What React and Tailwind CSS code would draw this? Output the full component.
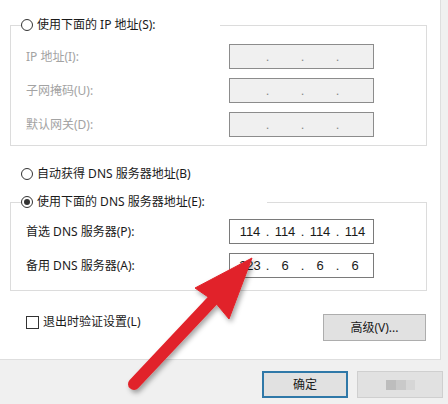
import React from 'react';

const font = { fontFamily: '"Noto Sans", "Noto Sans CJK SC", sans-serif' };

function Radio({ checked }) {
  return (
    <span className="w-[12px] h-[12px] rounded-full border border-[#333] bg-white flex items-center justify-center shrink-0">
      {checked && <span className="w-[6px] h-[6px] rounded-full bg-[#333]" />}
    </span>
  );
}

function IpBox({ parts, disabled }) {
  const seg = (v, i) => (
    <React.Fragment key={i}>
      {i > 0 && <span className={`w-[7px] text-center ${disabled ? 'text-[#8a8a8a]' : ''}`}>.</span>}
      <span className="w-[28px] text-center">{v}</span>
    </React.Fragment>
  );
  return (
    <div
      className={`h-[25px] w-[145px] border flex items-center pl-[6px] text-[13px] ${
        disabled ? 'bg-[#f0f0f0] border-[#8c8c8c]' : 'bg-white border-[#7a7a7a] text-[#1a1a1a]'
      }`}
      style={{ fontFamily: '"Liberation Sans", "Noto Sans", sans-serif' }}
    >
      {parts.map(seg)}
    </div>
  );
}

export default function App() {
  const empty = ['', '', '', ''];
  const ipRows = ['IP 地址(I):', '子网掩码(U):', '默认网关(D):'];

  return (
    <div className="w-[448px] h-[404px] relative overflow-hidden bg-[#f0f0f0] text-[12px] text-[#1a1a1a]" style={font}>
      <div className="h-[360px] w-[441px] bg-white border-r border-b border-[#dedede] px-[10px] pt-[17px]">
        {/* static IP */}
        <fieldset className="w-[417px] border border-[#dcdcdc]">
          <legend className="ml-[10px] w-[199px] h-[16px] flex items-center gap-[4px]">
            <Radio />
            <span>使用下面的 IP 地址(S):</span>
          </legend>
          <div className="grid grid-cols-[203px_145px] gap-y-[9px] pt-[11px] pb-[8px] pl-[15px] items-center text-[#a3a3a3]">
            {ipRows.map(l => (
              <React.Fragment key={l}>
                <span>{l}</span>
                <IpBox parts={empty} disabled />
              </React.Fragment>
            ))}
          </div>
        </fieldset>

        <div className="mt-[20px] pl-[11px] h-[16px] flex items-center gap-[4px]">
          <Radio />
          <span>自动获得 DNS 服务器地址(B)</span>
        </div>

        {/* DNS */}
        <fieldset className="mt-[12px] w-[417px] border border-[#dcdcdc]">
          <legend className="ml-[10px] w-[246px] h-[16px] flex items-center gap-[4px]">
            <Radio checked />
            <span>使用下面的 DNS 服务器地址(E):</span>
          </legend>
          <div className="grid grid-cols-[203px_145px] gap-y-[9px] pt-[9px] pb-[12px] pl-[15px] items-center">
            <span>首选 DNS 服务器(P):</span>
            <IpBox parts={['114', '114', '114', '114']} />
            <span>备用 DNS 服务器(A):</span>
            <IpBox parts={['223', '6', '6', '6']} />
          </div>
        </fieldset>

        <div className="mt-[23px] w-[416px] flex justify-between items-start">
          <label className="pl-[16px] h-[16px] flex items-center gap-[4px]">
            <span className="w-[13px] h-[13px] border border-[#333] bg-white" />
            <span>退出时验证设置(L)</span>
          </label>
          <button className="w-[103px] h-[27px] bg-[#e1e1e1] border border-[#adadad] text-[12px]">高级(V)...</button>
        </div>
      </div>

      {/* bottom buttons */}
      <div className="flex pl-[262px] pt-[11px] gap-[9px]">
        <button className="w-[86px] h-[27px] bg-[#e1e1e1] border-2 border-[#2f78a8] text-[12px]">确定</button>
        <button className="w-[86px] h-[27px] bg-[#e1e1e1] border border-[#cfcfcf] flex items-center justify-center">
          <span className="flex">
            <span className="w-[10px] h-[10px] bg-[#bdbdbd]" />
            <span className="w-[10px] h-[10px] bg-[#c9c9c9]" />
            <span className="w-[9px] h-[10px] bg-[#d6d6d6]" />
          </span>
        </button>
      </div>

      {/* red arrow overlay */}
      <svg className="absolute left-0 top-0 pointer-events-none" width="448" height="404" viewBox="0 0 448 404">
        <defs>
          <filter id="sh" x="-20%" y="-20%" width="140%" height="140%">
            <feDropShadow dx="2" dy="3" stdDeviation="2.5" floodColor="#000" floodOpacity="0.35" />
          </filter>
        </defs>
        <g filter="url(#sh)" fill="#e1242a" stroke="#e1242a">
          <line x1="134" y1="384" x2="214" y2="299" strokeWidth="12" strokeLinecap="round" />
          <polygon points="252,258 229,319 214,301 195,288" strokeWidth="1" strokeLinejoin="round" />
        </g>
      </svg>
    </div>
  );
}
